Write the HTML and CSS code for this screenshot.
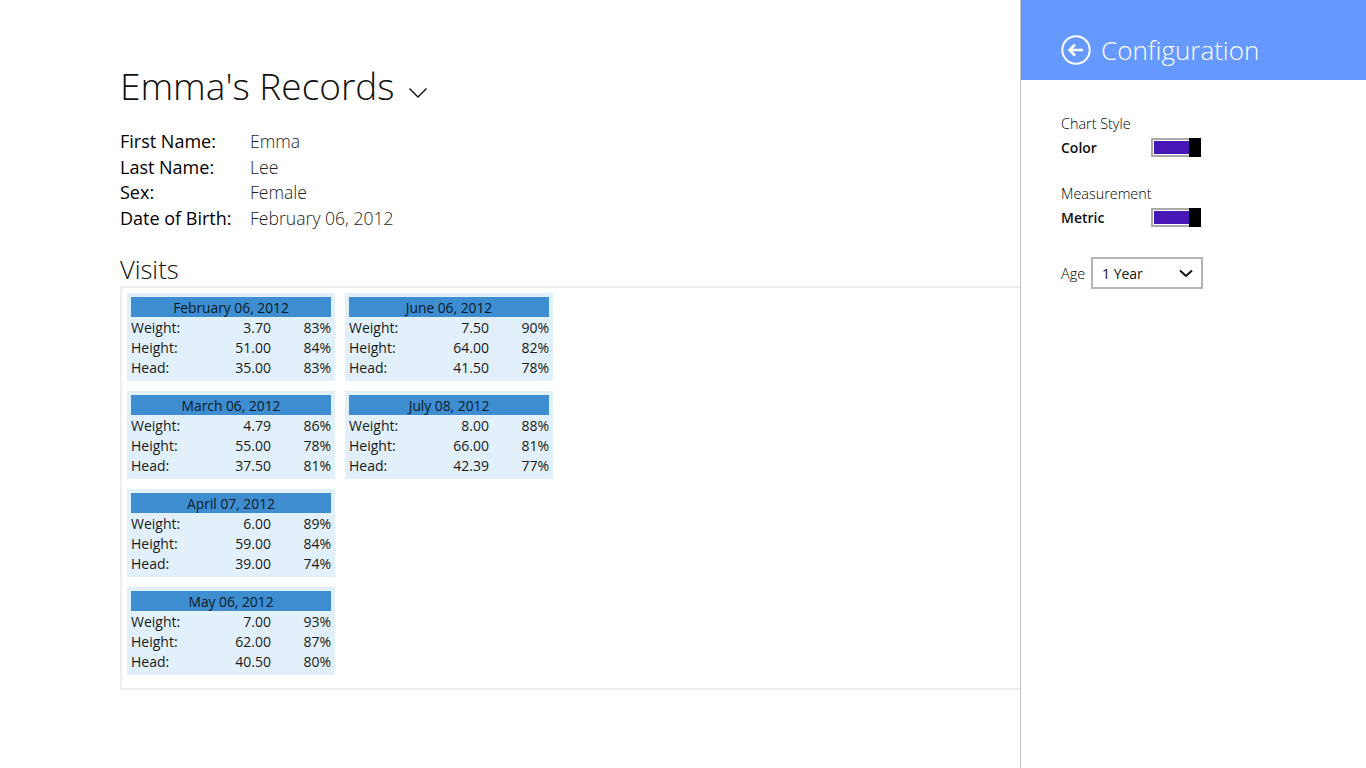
FILE: index.html
```html
<!DOCTYPE html>
<html lang="en">
<head>
<meta charset="utf-8">
<title>Emma's Records</title>
<link rel="stylesheet" href="styles.css">
</head>
<body>
<div class="app">
  <main class="main">
    <h1 class="title">Emma's Records
      <svg class="title-chevron" width="20" height="12" viewBox="0 0 20 12"><path d="M1.5 1.5 L10 10 L18.5 1.5" fill="none" stroke="#111" stroke-width="1.4"/></svg>
    </h1>
    <dl class="info">
      <dt>First Name:</dt><dd>Emma</dd>
      <dt>Last Name:</dt><dd>Lee</dd>
      <dt>Sex:</dt><dd>Female</dd>
      <dt>Date of Birth:</dt><dd>February 06, 2012</dd>
    </dl>
    <h2 class="visits-title">Visits</h2>
    <section class="visits">
      <article class="card"><h3>February 06, 2012</h3>
        <div class="row"><span>Weight:</span><span>3.70</span><span>83%</span></div>
        <div class="row"><span>Height:</span><span>51.00</span><span>84%</span></div>
        <div class="row"><span>Head:</span><span>35.00</span><span>83%</span></div></article>
      <article class="card"><h3>March 06, 2012</h3>
        <div class="row"><span>Weight:</span><span>4.79</span><span>86%</span></div>
        <div class="row"><span>Height:</span><span>55.00</span><span>78%</span></div>
        <div class="row"><span>Head:</span><span>37.50</span><span>81%</span></div></article>
      <article class="card"><h3>April 07, 2012</h3>
        <div class="row"><span>Weight:</span><span>6.00</span><span>89%</span></div>
        <div class="row"><span>Height:</span><span>59.00</span><span>84%</span></div>
        <div class="row"><span>Head:</span><span>39.00</span><span>74%</span></div></article>
      <article class="card"><h3>May 06, 2012</h3>
        <div class="row"><span>Weight:</span><span>7.00</span><span>93%</span></div>
        <div class="row"><span>Height:</span><span>62.00</span><span>87%</span></div>
        <div class="row"><span>Head:</span><span>40.50</span><span>80%</span></div></article>
      <article class="card"><h3>June 06, 2012</h3>
        <div class="row"><span>Weight:</span><span>7.50</span><span>90%</span></div>
        <div class="row"><span>Height:</span><span>64.00</span><span>82%</span></div>
        <div class="row"><span>Head:</span><span>41.50</span><span>78%</span></div></article>
      <article class="card"><h3>July 08, 2012</h3>
        <div class="row"><span>Weight:</span><span>8.00</span><span>88%</span></div>
        <div class="row"><span>Height:</span><span>66.00</span><span>81%</span></div>
        <div class="row"><span>Head:</span><span>42.39</span><span>77%</span></div></article>
    </section>
  </main>
  <aside class="panel">
    <header class="panel-head">
      <svg class="back" width="30" height="30" viewBox="0 0 30 30"><circle cx="15" cy="15" r="13.7" fill="none" stroke="#fff" stroke-width="2"/><path d="M8 15 H22 M14 9.5 L8.5 15 L14 20.5" fill="none" stroke="#fff" stroke-width="2.6"/></svg>
      <span class="panel-title">Configuration</span>
    </header>
    <div class="panel-body">
      <div class="setting">
        <div class="setting-label">Chart Style</div>
        <div class="setting-row"><b>Color</b><span class="toggle"><span class="toggle-fill"></span><span class="toggle-thumb"></span></span></div>
      </div>
      <div class="setting">
        <div class="setting-label">Measurement</div>
        <div class="setting-row"><b>Metric</b><span class="toggle"><span class="toggle-fill"></span><span class="toggle-thumb"></span></span></div>
      </div>
      <div class="age">
        <span>Age</span>
        <div class="select"><span>1 Year</span>
          <svg width="14" height="9" viewBox="0 0 14 9"><path d="M1 1.5 L7 7 L13 1.5" fill="none" stroke="#111" stroke-width="2"/></svg>
        </div>
      </div>
    </div>
  </aside>
</div>
</body>
</html>
```
FILE: styles.css
```css
html, body { margin: 0; padding: 0; height: 100%; background: #fff; overflow: hidden; }
body { font-family: "Open Sans", "Liberation Sans", sans-serif; color: #111; }
.app { display: flex; height: 768px; }
.main { width: 1020px; padding: 59px 0 0 120px; box-sizing: border-box; flex: none; }
.title { margin: 0; height: 54px; font-size: 37px; line-height: 54px; font-weight: 300; white-space: nowrap; display: flex; align-items: center; }
.title-chevron { margin: 14px 0 0 13px; }
.info { margin: 16px 0 0; display: grid; grid-template-columns: 130px 1fr; grid-auto-rows: 25.6px; line-height: 25.6px; }
.info dt { font-size: 18px; font-weight: 400; color: #000; }
.info dd { margin: 0; font-size: 17.6px; font-weight: 300; color: #222; }
.visits-title { margin: 21px 0 0; font-size: 25.5px; line-height: 34px; height: 34px; font-weight: 300; }
.visits { box-sizing: border-box; height: 404px; border: 2px solid #eee; border-right: 0; padding: 5px; display: grid; grid-auto-flow: column; grid-template-rows: repeat(4, 88px); grid-auto-columns: 208px; gap: 10px; }
.card { background: #e1f0fa; padding: 4px; }
.card h3 { margin: 0; height: 20px; background: #3e8dd0; font-size: 13.8px; line-height: 21px; font-weight: 400; text-align: center; color: #0a1a2a; }
.row { display: grid; grid-template-columns: 80px 60px 60px; height: 20px; font-size: 14px; line-height: 22px; color: #1a1a1a; }
.row span:nth-child(n+2) { text-align: right; }
.panel { flex: none; width: 346px; border-left: 1px solid #c4c4c4; box-sizing: border-box; }
.panel-head { height: 80px; background: #6699ff; color: #fff; display: flex; align-items: center; padding: 20px 0 0 40px; box-sizing: border-box; }
.back { margin-right: 10px; }
.panel-title { font-size: 26px; font-weight: 300; line-height: 30px; }
.panel-body { padding: 33px 0 0 40px; font-size: 14px; color: #111; }
.setting { height: 70px; }
.setting-label { height: 20px; font-size: 14.4px; line-height: 22px; font-weight: 300; color: #000; }
.setting-row { display: flex; align-items: center; height: 28px; }
.setting-row b { width: 90px; font-weight: 600; line-height: 22px; padding-top: 1px; }
.toggle { position: relative; display: block; box-sizing: border-box; width: 50px; height: 19px; border: 2px solid #a9a9a9; padding: 1px; }
.toggle-fill { display: block; height: 100%; width: 35px; background: #4617b4; }
.toggle-thumb { position: absolute; right: -2px; top: -2px; width: 12px; height: 19px; background: #000; }
.age { display: flex; align-items: center; gap: 4px; margin-top: 4px; }
.age > span { font-size: 14.5px; font-weight: 300; color: #000; width: 26px; }
.select { box-sizing: border-box; width: 112px; height: 32px; border: 2px solid #b4b4b4; display: flex; align-items: center; justify-content: space-between; padding: 0 8px 0 9px; }
```
